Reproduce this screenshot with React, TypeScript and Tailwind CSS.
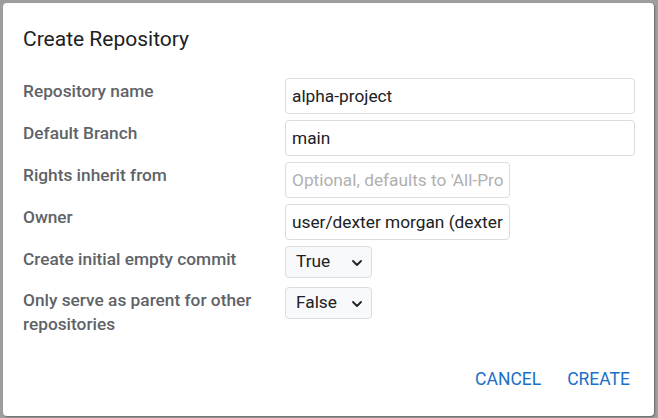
import React from "react";

const labelCls = "w-[262px] shrink-0 pr-4 pt-[1px] text-[17.3px] leading-6 font-medium text-[#5f6368]";
const inputCls =
  "h-9 rounded border border-[#dadce0] bg-white px-[6px] text-[17.3px] text-[#202124] outline-none placeholder:text-[#b0b0b0]";

function Chevron() {
  return (
    <svg
      className="pointer-events-none absolute right-[10px] top-[14px]"
      width="10"
      height="6"
      viewBox="0 0 10 6"
      fill="none"
    >
      <path d="M1 1l4 4 4-4" stroke="#202124" strokeWidth="1.8" strokeLinecap="round" strokeLinejoin="round" />
    </svg>
  );
}

function BoolSelect({ value }: { value: string }) {
  return (
    <div className="relative w-[87px]">
      <select
        defaultValue={value}
        className="h-8 w-full appearance-none rounded border border-[#dadce0] bg-[#f8f9fa] pl-[10px] text-[17.3px] text-[#202124] outline-none"
      >
        <option>True</option>
        <option>False</option>
      </select>
      <Chevron />
    </div>
  );
}

export default function App() {
  return (
    <div className="h-[418px] w-[658px] bg-[#9e9e9e] pl-[3px] pt-[3px]" style={{ fontFamily: "Roboto, 'Liberation Sans', sans-serif" }}>
      <div className="flex h-[413px] w-[651px] flex-col rounded bg-white pl-5 pr-[19px] pt-5 shadow-[1px_1px_2px_rgba(0,0,0,0.35)]">
        <h2 className="text-[21px] leading-8 font-normal text-[#202124]">Create Repository</h2>

        <div className="mt-[23px] flex flex-col">
          <div className="flex h-[42px] items-start">
            <label className={labelCls}>Repository name</label>
            <input className={inputCls + " w-[350px]"} defaultValue="alpha-project" />
          </div>
          <div className="flex h-[42px] items-start">
            <label className={labelCls}>Default Branch</label>
            <input className={inputCls + " w-[350px]"} defaultValue="main" />
          </div>
          <div className="flex h-[42px] items-start">
            <label className={labelCls}>Rights inherit from</label>
            <input className={inputCls + " w-[225px]"} placeholder="Optional, defaults to 'All-Projects'" />
          </div>
          <div className="flex h-[42px] items-start">
            <label className={labelCls}>Owner</label>
            <input className={inputCls + " w-[225px]"} defaultValue="user/dexter morgan (dexter)" />
          </div>
          <div className="flex h-[41px] items-start">
            <label className={labelCls + " pt-0"}>Create initial empty commit</label>
            <BoolSelect value="True" />
          </div>
          <div className="flex items-start">
            <label className={labelCls + " pt-0"}>Only serve as parent for other repositories</label>
            <BoolSelect value="False" />
          </div>
        </div>

        <div className="mt-auto mb-[25px] flex justify-end gap-4">
          <button className="px-[5px] text-[17.5px] leading-6 uppercase text-[#1a6fc9]">Cancel</button>
          <button className="px-[5px] text-[17.5px] leading-6 uppercase text-[#1a6fc9]">Create</button>
        </div>
      </div>
    </div>
  );
}
